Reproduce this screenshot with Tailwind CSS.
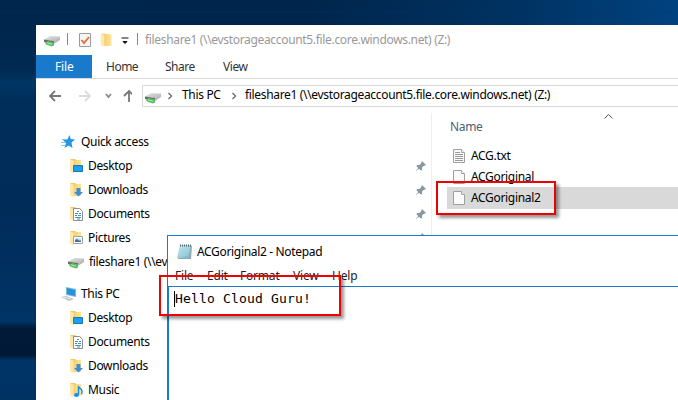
<!DOCTYPE html>
<html lang="en">
<head>
<meta charset="utf-8">
<title>File Explorer</title>
<script src="https://cdn.jsdelivr.net/npm/@tailwindcss/browser@4"></script>
</head>
<body class="relative h-[400px] w-[678px] overflow-hidden bg-[#00305f] font-['Noto_Sans',sans-serif] text-[12px] leading-[16px] tracking-[-.33px] whitespace-nowrap text-black">
<svg class="absolute h-0 w-0">
  <defs>
    <linearGradient id="gold" x1="0" x2="1"><stop stop-color="#f6cf6c"/><stop offset="1" stop-color="#ffe397"/></linearGradient>
    <linearGradient id="metal" x1="0" x2="1" y2="1"><stop stop-color="#e8e8e8"/><stop offset="1" stop-color="#b0b0b0"/></linearGradient>
    <linearGradient id="pad" x2="1" y2="1"><stop stop-color="#d4f0f5"/><stop offset="1" stop-color="#6db5c7"/></linearGradient>
  </defs>
  <symbol id="drive" viewBox="0 0 16 16"><path d="M0 7.500 6.500 4 16 4.500 10 9z" fill="url(#metal)"/><path d="m0 7.500 10 1.500v3L0 10z" fill="#6b6d6c"/><path d="m10 9 6-4.500V8l-6 4z" fill="#b9b9b9"/><path d="m1 10.500 3-1.500 6 1.500v3L8 14.500l-6-2z" fill="#58bd62"/><path d="m3 10.800 5 1.400" stroke="#a8efaa"/></symbol>
  <symbol id="folder" viewBox="0 0 14 14"><path d="M1 0h5l1 1h5v12H1z" fill="#efc667"/><path d="M4 1h8v12H4z" fill="url(#gold)"/><path d="m1 0 3.500 2v12L1 13z" fill="#ffe8ad"/></symbol>
  <symbol id="desktop" viewBox="0 0 14 14"><use href="#folder" width="14" height="14"/><path d="M4.500 6.500h9v6h-9z" fill="#19a0f5" stroke="#1478bd"/></symbol>
  <symbol id="downloads" viewBox="0 0 14 14"><use href="#folder" width="14" height="14"/><path d="M7.500 5h4v4H14l-4.500 4.500L5 9h2.500z" fill="#3b8ddd"/></symbol>
  <symbol id="documents" viewBox="0 0 14 14"><use href="#folder" width="14" height="14"/><path d="M4.500 1.500h6l3 3v9h-9z" fill="#fff" stroke="#8b9297"/><path d="M8 4.500h2M6 6.500h3m1 0h2M6 8.500h2m1 0h3M6 10.500h6M8 12h3" stroke="#4b91c5"/></symbol>
  <symbol id="pictures" viewBox="0 0 14 14"><use href="#folder" width="14" height="14"/><path d="M4.500 5.500h9v7h-9z" fill="#fff" stroke="#9ba3a8"/><path d="M6 7h6v4H6z" fill="#c8e4f7"/><path d="m6 9 2-1 2 1.500h2V11H6z" fill="#466f91"/></symbol>
  <symbol id="music" viewBox="0 0 14 14"><use href="#folder" width="14" height="14"/><path d="M9.500 11.500V3c0 3 4 2 3.500 6 0 1-.5 2-1 2" fill="none" stroke="#168fe8" stroke-width="1.500"/><ellipse cx="7.500" cy="12" rx="2.500" ry="2" fill="#168fe8"/></symbol>
  <symbol id="pin" viewBox="0 0 12 12"><path d="m7 1 4 4-1.200.8-.8-.3L7 7.500V10L5.800 10.500 4 8.700 1.200 11 1 10.800 3.300 8 1.500 6.200 2 5h2.500L6.500 3l-.3-.8z" fill="#8796a1"/></symbol>
  <symbol id="page" viewBox="0 0 12 14"><path d="M.5.500h8l3 3v10H.5z" fill="#fafafa" stroke="#a0a0a0"/><path d="M8.500.5v3h3" fill="#fff" stroke="#a3a3a3"/></symbol>
  <symbol id="chev" viewBox="0 0 6 8"><path d="m1.500 1 3 3-3 3" fill="none" stroke="#777" stroke-width="1.500"/></symbol>
</svg>

<svg class="absolute inset-0" width="678" height="400">
  <defs>
    <linearGradient id="top"><stop stop-color="#00264d"/><stop offset=".45" stop-color="#00254c"/><stop offset=".75" stop-color="#003261"/><stop offset="1" stop-color="#004280"/></linearGradient>
    <linearGradient id="side" x2="0" y2="1"><stop stop-color="#00264d"/><stop offset=".12" stop-color="#002a52"/><stop offset=".155" stop-color="#003664"/><stop offset=".2" stop-color="#002e5a"/><stop offset=".5" stop-color="#002c5a"/><stop offset=".79" stop-color="#003466"/><stop offset=".81" stop-color="#001a38"/><stop offset=".88" stop-color="#001935"/><stop offset=".895" stop-color="#003467"/><stop offset="1" stop-color="#003264"/></linearGradient>
  </defs>
  <path d="M0 0h678v26H0z" fill="url(#top)"/><path d="M0 25h36v375H0z" fill="url(#side)"/><path d="M0 12h678" stroke="#003b70" opacity=".3"/>
</svg>

<main class="absolute top-[25px] left-[36px] flex h-[375px] w-[642px] flex-col bg-white">
  <header class="flex h-[30px] shrink-0 items-center pl-2 text-[#999]">
    <svg class="h-4 w-4"><use href="#drive"/></svg>
    <i class="ml-[7px] h-3 w-px -translate-y-px bg-[#888]"></i>
    <svg class="ml-[11px] h-[14px] w-3" viewBox="0 0 12 14"><path d="M.5.500h11v13H.5z" fill="#f4f6f7" stroke="#9b9b9b"/><path d="m2.500 7 2.500 3 5-6" fill="none" stroke="#f0692c" stroke-width="1.800"/></svg>
    <svg class="ml-[9px] h-[14px] w-[13px]" viewBox="0 0 14 14"><use href="#folder" width="14" height="14"/></svg>
    <svg class="ml-2 h-2 w-2 translate-y-px" viewBox="0 0 8 8"><path d="M.5 1h7M2 4.500h4L4 6.500z" fill="#111" stroke="#111"/></svg>
    <i class="ml-2 h-3 w-px -translate-y-px bg-[#888]"></i>
    <span class="ml-[7px]">fileshare1 (\\evstorageaccount5.file.core.windows.net) (Z:)</span>
  </header>
  <nav class="flex h-6 shrink-0 border-b border-[#d9d9d9] text-[#333] leading-[24px] tracking-[-.15px]">
    <span class="h-[23px] w-14 bg-[#1979ca] pl-[19px] text-white">File</span>
    <span class="ml-[14px] w-[59px] tracking-[-.5px]">Home</span><span class="w-[58px] tracking-[-.5px]">Share</span><span class="tracking-[-.4px]">View</span>
  </nav>
  <section class="flex h-[34px] shrink-0 items-center pl-3">
    <svg class="h-3 w-[84px]" viewBox="0 0 84 12" fill="none" stroke="#777" stroke-width="1.800"><path d="M13 6H2m5-5L2 6l5 5"/><path d="M31 6h11m-5-5 5 5-5 5" stroke="#ddd"/><path d="m58 4 2.500 3L63 4" stroke="#888"/><path d="M81 12V1m-5 5 5-5 5 5"/></svg>
    <div class="ml-[10px] flex h-[22px] flex-1 items-center border border-r-0 border-[#d9d9d9] pl-[2px]">
      <svg class="h-4 w-4 translate-y-px"><use href="#drive"/></svg><svg class="ml-[6px] h-2 w-[6px]"><use href="#chev"/></svg>
      <span class="ml-[9px] w-[49px] -translate-y-px">This PC</span><svg class="h-2 w-[6px]"><use href="#chev"/></svg>
      <span class="ml-2 -translate-y-px">fileshare1 (\\evstorageaccount5.file.core.windows.net) (Z:)</span>
    </div>
  </section>
  <div class="flex min-h-0 flex-1">
    <aside class="w-[395px] pt-[17px] pl-[25px]">
      <div class="flex h-6 items-center"><svg class="mr-[6px] h-[14px] w-[14px]" viewBox="0 0 14 14"><path d="m8.500 0 1.300 4 4.200.5-3.500 3 1 5.500L7.500 10.500l-4 2.500 1.500-5L2 5l4.500-.8z" fill="#2397e2"/><path d="M1 4.500h4M0 7.500h4M0 10.500h4" stroke="#7fc6f1"/></svg>Quick access</div>
      <div class="flex h-6 items-center pl-2"><svg class="mr-[5px] h-[14px] w-[14px]"><use href="#desktop"/></svg><span class="w-[327px]">Desktop</span><svg class="h-3 w-3"><use href="#pin"/></svg></div>
      <div class="flex h-6 items-center pl-2"><svg class="mr-[5px] h-[14px] w-[14px]"><use href="#downloads"/></svg><span class="w-[327px]">Downloads</span><svg class="h-3 w-3"><use href="#pin"/></svg></div>
      <div class="flex h-6 items-center pl-2"><svg class="mr-[5px] h-[14px] w-[14px]"><use href="#documents"/></svg><span class="w-[327px]">Documents</span><svg class="h-3 w-3"><use href="#pin"/></svg></div>
      <div class="flex h-6 items-center pl-2"><svg class="mr-[5px] h-[14px] w-[14px]"><use href="#pictures"/></svg><span class="w-[327px]">Pictures</span><svg class="h-3 w-3"><use href="#pin"/></svg></div>
      <div class="flex h-6 items-center pl-[7px]"><svg class="mr-[5px] h-4 w-4"><use href="#drive"/></svg>fileshare1 (\\evs</div>
      <div class="mt-2 flex h-6 items-center"><svg class="mr-1 h-[14px] w-4" viewBox="0 0 16 14"><path d="m5 0 10 2v8L5 8z" fill="#78b9dc"/><path d="m6 1 8 2v6L6 7z" fill="#2394db"/><path d="m0 10 5-1 8 3-5 2z" fill="#b8c1c7"/><path d="m2 10 8 2" stroke="#eff2f3"/></svg>This PC</div>
      <div class="flex h-6 items-center pl-2"><svg class="mr-[5px] h-[14px] w-[14px]"><use href="#desktop"/></svg>Desktop</div>
      <div class="flex h-6 items-center pl-2"><svg class="mr-[5px] h-[14px] w-[14px]"><use href="#documents"/></svg>Documents</div>
      <div class="flex h-6 items-center pl-2"><svg class="mr-[5px] h-[14px] w-[14px]"><use href="#downloads"/></svg>Downloads</div>
      <div class="flex h-6 items-center pl-2"><svg class="mr-[5px] h-[14px] w-[14px]"><use href="#music"/></svg>Music</div>
    </aside>
    <section class="flex-1 border-l border-[#eee]">
      <div class="flex h-[31px] pl-[18px] pt-[6px] text-[#4c607a]"><span class="w-[154px]">Name</span><svg class="h-[5px] w-[9px] -translate-y-[5px]" viewBox="0 0 9 5"><path d="m.5 4.500 4-4 4 4" fill="none" stroke="#555"/></svg></div>
      <div class="mt-[1px] flex h-[21px] items-center pl-[21px]"><svg class="mr-[6px] h-[14px] w-3" viewBox="0 0 12 14"><use href="#page" width="12" height="14"/><path d="M2 3.500h5M2 5.500h8M2 7.500h8M2 9.500h8M2 11.500h8" stroke="#999"/></svg>ACG.txt</div>
      <div class="flex h-[21px] items-center pl-[21px]"><svg class="mr-[6px] h-[14px] w-3"><use href="#page"/></svg>ACGoriginal</div>
      <div class="ml-[15px] flex h-[22px] items-center bg-[#d9d9d9] pl-[6px]"><svg class="mr-[6px] h-[14px] w-3"><use href="#page"/></svg>ACGoriginal2</div>
    </section>
  </div>
</main>

<article class="absolute top-[235px] left-[167px] flex h-[165px] w-[511px] flex-col border-t border-l border-[#1979ca] bg-white">
  <header class="flex h-[31px] items-center pl-[9px]"><svg class="mr-1 h-4 w-4" viewBox="0 0 16 16"><path d="M3 2h12l-1 13H1z" fill="#98a5ad"/><path d="M3 1h11l-2 13H0z" fill="url(#pad)"/><path d="M3 1.500h11" stroke="#59666d" stroke-width="2" stroke-dasharray="1 1"/><path d="M3 5h9M3 7h9M2 9h10M2 11h9" stroke="#a4dce6" stroke-width=".7"/></svg>ACGoriginal2 - Notepad</header>
  <nav class="flex h-[19px] shrink-0 pl-[7px] pt-px tracking-[-.2px] text-[#222]"><span class="w-8">File</span><span class="w-[33px]">Edit</span><span class="w-[53px]">Format</span><span class="w-[39px]">View</span><span>Help</span></nav>
  <div class="flex flex-1 border-t border-l border-[#1979ca] pt-1 pl-[5px] font-['DejaVu_Sans_Mono',monospace] text-[13px] leading-[16px]"><i class="h-4 w-px bg-black"></i><pre class="font-['DejaVu_Sans_Mono',monospace] tracking-[.17px]">Hello Cloud Guru!</pre></div>
</article>

<div class="absolute top-[181px] left-[436px] h-[34px] w-[120px] border-2 border-[#f00000] shadow-[3px_3px_3px_#0006]"></div>
<div class="absolute top-[275px] left-[159px] h-[41px] w-[182px] border-2 border-[#f00000] shadow-[3px_3px_3px_#0006]"></div>
</body>
</html>
